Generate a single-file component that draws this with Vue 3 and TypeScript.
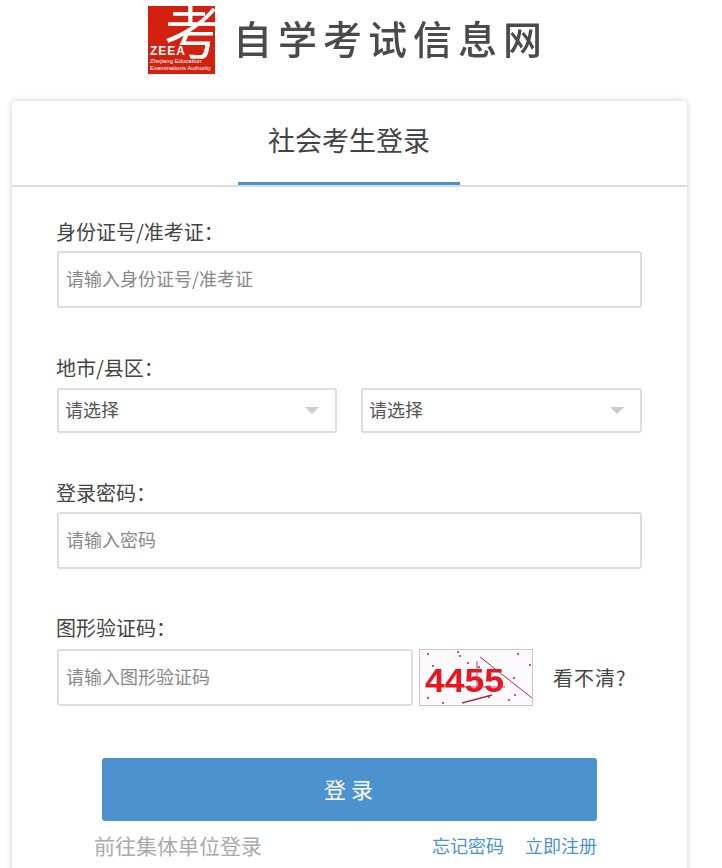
<template>
  <div class="page">
    <header class="banner">
      <div class="logo">
        <span class="logo__char">考</span>
        <span class="logo__name">ZEEA</span>
        <span class="logo__sub">Zhejiang Education<br />Examinations Authority</span>
      </div>
      <div class="banner__title">自学考试信息网</div>
    </header>

    <main class="card">
      <div class="card__head">
        <h1 class="card__title">社会考生登录</h1>
      </div>

      <form class="form" @submit.prevent>
        <div class="field">
          <label class="field__label">身份证号/准考证：</label>
          <input class="input" type="text" placeholder="请输入身份证号/准考证" />
        </div>

        <div class="field">
          <label class="field__label">地市/县区：</label>
          <div class="selects">
            <div v-for="n in 2" :key="n" class="select">
              <span>请选择</span>
              <i class="select__arrow"></i>
            </div>
          </div>
        </div>

        <div class="field">
          <label class="field__label">登录密码：</label>
          <input class="input" type="password" placeholder="请输入密码" />
        </div>

        <div class="field field--captcha">
          <label class="field__label">图形验证码：</label>
          <div class="captcha">
            <input class="input captcha__input" type="text" placeholder="请输入图形验证码" />
            <svg class="captcha__img" width="114" height="57" viewBox="0 0 114 57">
              <rect width="114" height="57" fill="#fcfafc" />
              <rect x="0.5" y="0.5" width="113" height="56" fill="none" stroke="#c9c5c8" />
              <text x="6" y="43" class="captcha__text" textLength="79" lengthAdjust="spacingAndGlyphs">4455</text>
              <path d="M61 8 L113 49" stroke="#a8304a" stroke-width="1" fill="none" />
              <path d="M43 54 L73 46" stroke="#a8304a" stroke-width="1.4" fill="none" />
              <path d="M58 12 V42 M44 38 H86" stroke="#c43a55" stroke-width="1" fill="none" />
              <circle v-for="d in dots" :key="d[0] + '-' + d[1]" :cx="d[0]" :cy="d[1]" r="1.1" fill="#a03a6a" />
            </svg>
            <a class="captcha__refresh">看不清?</a>
          </div>
        </div>

        <button type="button" class="submit">登 录</button>

        <div class="links">
          <a class="links__group">前往集体单位登录</a>
          <div class="links__right">
            <a class="link">忘记密码</a>
            <a class="link">立即注册</a>
          </div>
        </div>
      </form>
    </main>
  </div>
</template>

<script setup lang="ts">
const dots: [number, number][] = [
  [9, 5], [39, 3], [41, 7], [99, 5], [111, 16], [14, 17], [49, 14], [95, 29],
  [9, 49], [24, 54], [90, 51], [96, 46], [70, 48], [60, 18]
]
</script>

<style>
html, body {
  margin: 0;
  height: 100%;
  overflow: hidden;
  background: #fff;
}
</style>

<style scoped>
.page {
  width: 699px;
  font-family: "Noto Sans CJK SC", "Liberation Sans", sans-serif;
  color: #444;
}

.banner {
  height: 101px;
  display: flex;
  align-items: flex-start;
  padding-left: 148px;
  box-sizing: border-box;
}

.logo {
  position: relative;
  width: 67px;
  height: 68px;
  margin-top: 6px;
  background: #d3200f;
  overflow: hidden;
  color: #fff;
}

.logo__char {
  position: absolute;
  top: -9px;
  left: 16px;
  font-size: 58px;
  line-height: 64px;
  font-weight: 400;
}

.logo__name {
  position: absolute;
  left: 2px;
  top: 39px;
  font-family: "Liberation Sans", sans-serif;
  font-size: 12px;
  line-height: 12px;
  font-weight: 700;
  letter-spacing: 1px;
}

.logo__sub {
  position: absolute;
  left: 2px;
  top: 52px;
  font-family: "Liberation Sans", sans-serif;
  font-size: 6px;
  line-height: 7px;
  white-space: nowrap;
}

.banner__title {
  margin: 11px 0 0 18px;
  font-size: 39px;
  line-height: 52px;
  letter-spacing: 6px;
  color: #4a4a4a;
  font-weight: 500;
  filter: blur(0.5px);
  white-space: nowrap;
}

.card {
  margin: 0 12px;
  height: 900px;
  background: #fff;
  border-radius: 4px;
  box-shadow: 0 0 6px rgba(0, 0, 0, 0.22);
}

.card__head {
  height: 84px;
  border-bottom: 2px solid #ddd;
  display: flex;
  justify-content: center;
}

.card__title {
  width: 222px;
  height: 84px;
  box-sizing: border-box;
  margin: 0 1px 0 0;
  text-align: center;
  font-size: 27px;
  line-height: 78px;
  font-weight: 400;
  color: #444;
  border-bottom: 3px solid #4b92cf;
}

.form {
  padding: 28px 45px 0;
}

.field {
  margin-bottom: 43px;
}

.field__label {
  display: block;
  margin: 0 0 2px -1px;
  font-size: 20px;
  line-height: 34px;
  color: #444;
}

.field--captcha .field__label {
  margin-top: -1px;
  margin-bottom: 4px;
}

.input {
  display: block;
  width: 100%;
  height: 57px;
  box-sizing: border-box;
  padding: 0 7px 4px;
  border: 2px solid #ddd;
  border-radius: 3px;
  outline: none;
  font-family: inherit;
  font-size: 18px;
  color: #444;
  background: #fff;
}

.input::placeholder {
  color: #888;
  opacity: 1;
}

.selects {
  display: flex;
  justify-content: space-between;
  margin-top: 3px;
}

.select {
  width: 280px;
  height: 45px;
  box-sizing: border-box;
  border: 2px solid #ddd;
  border-radius: 3px;
  padding: 0 16px 4px 6px;
  display: flex;
  align-items: center;
  justify-content: space-between;
  font-size: 18px;
  color: #555;
}

.select + .select {
  width: 281px;
}

.select__arrow {
  width: 0;
  height: 0;
  margin-top: 4px;
  border-left: 7px solid transparent;
  border-right: 7px solid transparent;
  border-top: 7px solid #ccc;
}

.captcha {
  display: flex;
  align-items: center;
}

.captcha__input {
  width: 356px;
  flex: none;
}

.captcha__img {
  margin-left: 6px;
  flex: none;
  filter: blur(0.4px);
}

.captcha__text {
  font-family: "Liberation Sans", sans-serif;
  font-size: 34px;
  font-weight: 700;
  fill: #e8141e;
}

.captcha__refresh {
  margin-left: 20px;
  font-size: 20px;
  letter-spacing: 1px;
  color: #444;
  white-space: nowrap;
}

.submit {
  display: block;
  width: 495px;
  height: 63px;
  margin: 52px 0 0 45px;
  padding: 0 2px 4px 0;
  border: 0;
  border-radius: 3px;
  background: #4b92cf;
  color: #fff;
  font-family: inherit;
  font-size: 22px;
}

.links {
  margin: 8px 0 0 37px;
  width: 503px;
  display: flex;
  justify-content: space-between;
  align-items: center;
}

.links__group {
  font-size: 21px;
  line-height: 32px;
  color: #aaa;
}

.links__right {
  display: flex;
  gap: 21px;
}

.link {
  font-size: 18px;
  color: #4b92cf;
}
</style>
